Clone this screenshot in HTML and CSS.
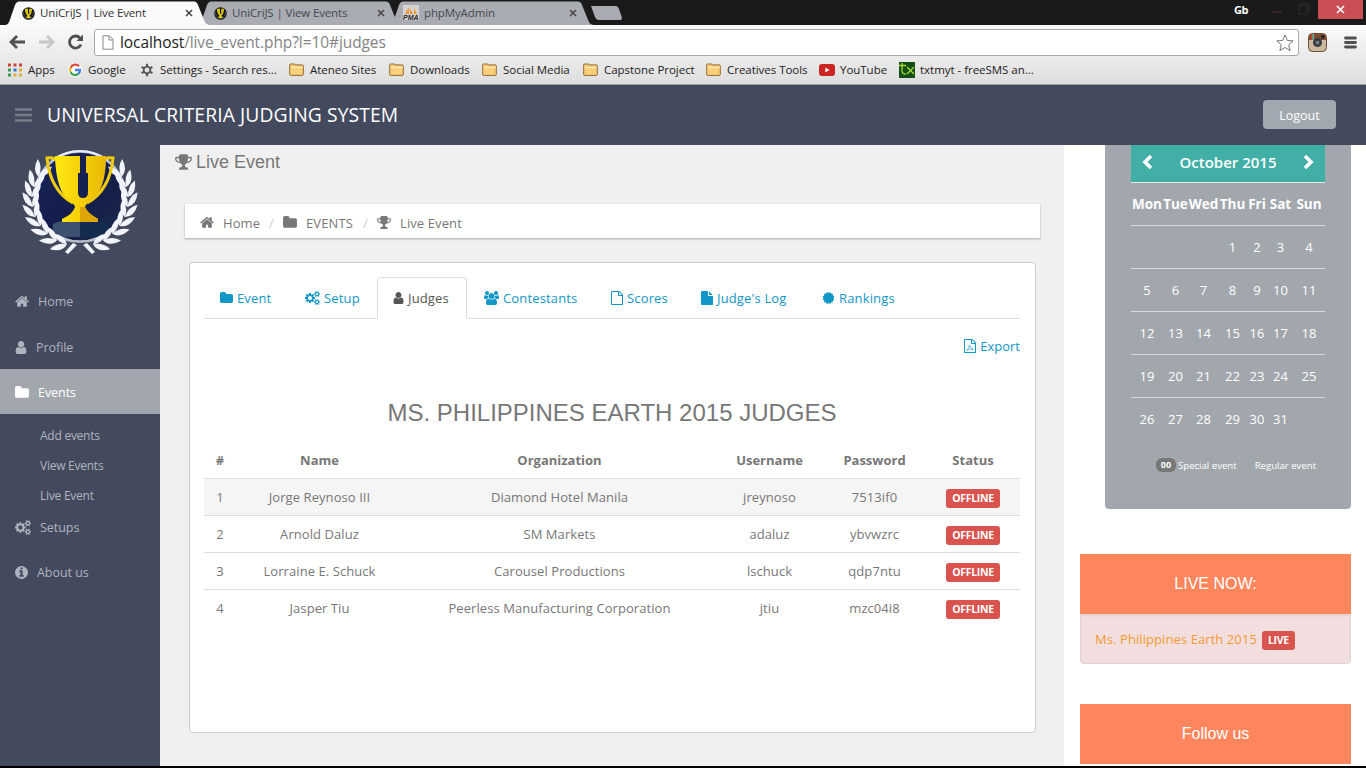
FILE: index.html
```html
<!DOCTYPE html>
<html lang="en">
<head>
<meta charset="utf-8">
<title>UniCriJS | Live Event</title>
<link rel="stylesheet" href="styles.css">
</head>
<body>
<svg class="defs" width="0" height="0" aria-hidden="true">
  <symbol id="home" viewBox="64 0 1664 1792"><path d="M1472 992v480q0 26-19 45t-45 19h-384v-384h-256v384h-384q-26 0-45-19t-19-45v-480q0-1 .5-3t.5-3l575-474 575 474q1 2 1 6zm223-69l-62 74q-8 9-21 11h-3q-13 0-21-7l-692-577-692 577q-12 8-24 7-13-2-21-11l-62-74q-8-10-7-23.5t11-21.5l719-599q32-26 76-26t76 26l244 204v-195q0-14 9-23t23-9h192q14 0 23 9t9 23v408l219 182q10 8 11 21.5t-7 23.5z"/></symbol>
  <symbol id="user" viewBox="256 0 1280 1792"><path d="M1536 1399q0 109-62.5 187t-150.5 78h-854q-88 0-150.5-78t-62.5-187q0-85 8.5-160.5t31.5-152 58.5-131 94-89 134.5-34.5q131 128 313 128t313-128q76 0 134.5 34.5t94 89 58.5 131 31.5 152 8.5 160.5zm-256-887q0 159-112.5 271.5t-271.5 112.5-271.5-112.5-112.5-271.5 112.5-271.5 271.5-112.5 271.5 112.5 112.5 271.5z"/></symbol>
  <symbol id="folder" viewBox="64 0 1664 1792"><path d="M1728 608v704q0 92-66 158t-158 66h-1216q-92 0-158-66t-66-158v-960q0-92 66-158t158-66h320q92 0 158 66t66 158v32h672q92 0 158 66t66 158z"/></symbol>
  <symbol id="info" viewBox="128 0 1536 1792"><path d="M1152 1376v-160q0-14-9-23t-23-9h-96v-512q0-14-9-23t-23-9h-320q-14 0-23 9t-9 23v160q0 14 9 23t23 9h96v320h-96q-14 0-23 9t-9 23v160q0 14 9 23t23 9h448q14 0 23-9t9-23zm-128-896v-160q0-14-9-23t-23-9h-192q-14 0-23 9t-9 23v160q0 14 9 23t23 9h192q14 0 23-9t9-23zm640 416q0 209-103 385.5t-279.5 279.5-385.5 103-385.5-103-279.5-279.5-103-385.5 103-385.5 279.5-279.5 385.5-103 385.5 103 279.5 279.5 103 385.5z"/></symbol>
  <symbol id="trophy" viewBox="64 0 1664 1792"><path d="M522 883q-74-162-74-371h-256v96q0 78 94.5 162t235.5 113zm1078-275v-96h-256q0 209-74 371 141-29 235.5-113t94.5-162zm128-128v128q0 71-41.5 143t-112 130-173 97.5-215.5 44.5q-42 54-95 95-38 34-52.5 72.5t-14.5 89.5q0 54 30.5 91t97.5 37q75 0 133.5 45.5t58.5 114.5v64q0 14-9 23t-23 9h-832q-14 0-23-9t-9-23v-64q0-69 58.5-114.5t133.5-45.5q67 0 97.5-37t30.5-91q0-51-14.5-89.5t-52.5-72.5q-53-41-95-95-113-5-215.5-44.5t-173-97.5-112-130-41.5-143v-128q0-40 28-68t68-28h288v-96q0-66 47-113t113-47h576q66 0 113 47t47 113v96h288q40 0 68 28t28 68z"/></symbol>
  <symbol id="cogs" viewBox="0 0 1920 1792"><path d="M896 896q0-106-75-181t-181-75-181 75-75 181 75 181 181 75 181-75 75-181zm768 512q0-52-38-90t-90-38-90 38-38 90q0 53 37.5 90.5t90.5 37.5 90.5-37.5 37.5-90.5zm0-1024q0-52-38-90t-90-38-90 38-38 90q0 53 37.5 90.5t90.5 37.5 90.5-37.5 37.5-90.5zm-384 421v185q0 10-7 19.5t-16 10.5l-155 24q-11 35-32 76 34 48 90 115 7 11 7 20 0 12-7 19-23 30-82.5 89.5t-78.5 59.5q-11 0-21-7l-115-90q-37 19-77 31-11 108-23 155-7 24-30 24h-186q-11 0-20-7.5t-10-17.5l-23-153q-34-10-75-31l-118 89q-7 7-20 7-11 0-21-8-144-133-144-160 0-9 7-19 10-14 41-53t47-61q-23-44-35-82l-152-24q-10-1-17-9.5t-7-19.5v-185q0-10 7-19.5t16-10.5l155-24q11-35 32-76-34-48-90-115-7-11-7-20 0-12 7-20 22-30 82-89t79-59q11 0 21 7l115 90q34-18 77-32 11-108 23-154 7-24 30-24h186q11 0 20 7.5t10 17.5l23 153q34 10 75 31l118-89q8-7 20-7 11 0 21 8 144 133 144 160 0 8-7 19-12 16-42 54t-45 60q23 48 34 82l152 23q10 2 17 10.5t7 19.5zm640 533v140q0 16-149 31-12 27-30 52 51 113 51 138 0 4-4 7-122 71-124 71-8 0-46-47t-52-68q-20 2-30 2t-30-2q-14 21-52 68t-46 47q-2 0-124-71-4-3-4-7 0-25 51-138-18-25-30-52-149-15-149-31v-140q0-16 149-31 13-29 30-52-51-113-51-138 0-4 4-7 4-2 35-20t59-34 30-16q8 0 46 46.5t52 67.5q20-2 30-2t30 2q51-71 92-112l6-2q4 0 124 70 4 3 4 7 0 25-51 138 17 23 30 52 149 15 149 31zm0-1024v140q0 16-149 31-12 27-30 52 51 113 51 138 0 4-4 7-122 71-124 71-8 0-46-47t-52-68q-20 2-30 2t-30-2q-14 21-52 68t-46 47q-2 0-124-71-4-3-4-7 0-25 51-138-18-25-30-52-149-15-149-31v-140q0-16 149-31 13-29 30-52-51-113-51-138 0-4 4-7 4-2 35-20t59-34 30-16q8 0 46 46.5t52 67.5q20-2 30-2t30 2q51-71 92-112l6-2q4 0 124 70 4 3 4 7 0 25-51 138 17 23 30 52 149 15 149 31z"/></symbol>
  <symbol id="users" viewBox="0 0 1920 1792"><path d="M593 896q-162 5-265 128h-134q-82 0-138-40.5t-56-118.5q0-353 124-353 6 0 43.5 21t97.5 42.5 119 21.5q67 0 133-23-5 37-5 66 0 159 81 256zm1071 637q0 120-73 189.5t-194 69.5h-874q-121 0-194-69.5t-73-189.5q0-53 3.5-103.5t14-109 26.5-108.5 43-97.5 62-81 85.5-53.5 111.5-20q10 0 43 21.5t73 48 107 48 135 21.5 135-21.5 107-48 73-48 43-21.5q61 0 111.5 20t85.5 53.5 62 81 43 97.5 26.5 108.5 14 109 3.5 103.5zm-1024-1277q0 106-75 181t-181 75-181-75-75-181 75-181 181-75 181 75 75 181zm704 384q0 159-112.5 271.5t-271.5 112.5-271.5-112.5-112.5-271.5 112.5-271.5 271.5-112.5 271.5 112.5 112.5 271.5zm576 225q0 78-56 118.5t-138 40.5h-134q-103-123-265-128 81-97 81-256 0-29-5-66 66 23 133 23 59 0 119-21.5t97.5-42.5 43.5-21q124 0 124 353zm-128-609q0 106-75 181t-181 75-181-75-75-181 75-181 181-75 181 75 75 181z"/></symbol>
  <symbol id="file-o" viewBox="0 0 1536 1792"><path d="M1468 380q28 28 48 76t20 88v1152q0 40-28 68t-68 28h-1344q-40 0-68-28t-28-68v-1600q0-40 28-68t68-28h896q40 0 88 20t76 48zm-444-244v376h376q-10-29-22-41l-313-313q-12-12-41-22zm384 1528v-1024h-416q-40 0-68-28t-28-68v-416h-768v1536h1280z"/></symbol>
  <symbol id="file" viewBox="128 0 1536 1792"><path d="M1152 512v-472q22 14 36 28l408 408q14 14 28 36h-472zm-128 32q0 40 28 68t68 28h544v1056q0 40-28 68t-68 28h-1344q-40 0-68-28t-28-68v-1600q0-40 28-68t68-28h800v544z"/></symbol>
  <symbol id="cert" viewBox="0 0 16 16"><g><rect x="2.7" y="2.7" width="10.6" height="10.6"/><rect x="2.7" y="2.7" width="10.6" height="10.6" transform="rotate(30 8 8)"/><rect x="2.7" y="2.7" width="10.6" height="10.6" transform="rotate(60 8 8)"/></g></symbol>
  <symbol id="fav" viewBox="0 0 13 13"><circle cx="6.500" cy="6.500" r="6.300" fill="#16181c"/><path d="M1 4.500Q2 11 6.500 12 11 11 12 4.500" fill="none" stroke="#5c6068" stroke-width=".8"/><path d="M3 1.700h3v5h1.200v-5H10q0 5-2.500 6.800L9 11H4l1.400-2.500Q3 7 3 1.700z" fill="#d8c80d"/></symbol>
  <symbol id="bmf" viewBox="0 0 15 13"><path d="M.7 11.500V2q0-1 1-1h3.600q.8 0 1 .9h7q1 0 1 1v8.600q0 .9-1 .9H1.600q-.9 0-.9-.9z" fill="#f9cf7c" stroke="#94692c"/><path d="M1.500 4.500h12.500" stroke="#fff0bd"/></symbol>
  <symbol id="close" viewBox="0 0 8 8"><path d="M1 1l6 6M7 1L1 7" fill="none" stroke="#444" stroke-width="1.500"/></symbol>
  <symbol id="tab" viewBox="0 0 206 24"><path d="M0 24Q3 24 4.500 20L10 4q1.500-3.500 4-3.500h175q3 0 4 3.500l6.500 16q1.500 4 6 4z"/></symbol>
</svg>

<div class="screen">
  <div class="chrome">
    <div class="tabstrip">
      <div class="tab t1"><svg class="tab-bg"><use href="#tab"/></svg><svg class="fav"><use href="#fav"/></svg><span>UniCriJS | Live Event</span><svg class="x"><use href="#close"/></svg></div>
      <div class="tab t2"><svg class="tab-bg"><use href="#tab"/></svg><svg class="fav"><use href="#fav"/></svg><span>UniCriJS | View Events</span><svg class="x"><use href="#close"/></svg></div>
      <div class="tab t3"><svg class="tab-bg"><use href="#tab"/></svg><svg class="pma" viewBox="0 0 16 16"><rect width="16" height="15" fill="#d5d3d0"/><path d="M2 9L6 2v7zM7 9V3l3 6zM11 9V3l3 6z" fill="#ee9634"/></svg><b class="pma-text">PMA</b><span>phpMyAdmin</span><svg class="x"><use href="#close"/></svg></div>
      <svg class="newtab" viewBox="0 0 32 16"><path d="M1 1h24q3 0 4 3l3 9q0 2-2 2H9q-3 0-4-3z" fill="#a9acb2"/></svg>
      <div class="winctl">
        <b>Gb</b>
        <svg class="minmax" viewBox="0 0 50 18"><path d="M10 11h9" stroke="#3a2224" stroke-width="2"/><path d="M36 5h8v8h-8zM38 5V3h8v8h-2" fill="none" stroke="#2c2c2e"/></svg>
        <div class="winclose"><svg width="9" height="9" viewBox="0 0 9 9"><path d="M1 1l7 7M8 1L1 8" stroke="#fff" stroke-width="1.600"/></svg></div>
      </div>
    </div>
    <div class="toolbar">
      <svg class="nav" viewBox="0 0 84 20"><g fill="none" stroke-width="2.800"><path d="M25 10H11M17 4l-6 6 6 6" stroke="#505050"/><path d="M39 10h13M47 4l6 6-6 6" stroke="#c6c6c6"/><path d="M81 12.500A6 6 0 1 1 80 6" stroke="#505050"/></g><path d="M83 2.500V9h-6.500z" fill="#505050"/></svg>
      <div class="omni">
        <svg width="12" height="15" viewBox="0 0 12 15"><path d="M1 .8h6.500L11 4.500v9.700H1zM7 1v4h4" fill="#fff" stroke="#888"/></svg>
        <span class="url"><i>localhost</i>/live_event.php?l=10#judges</span>
        <svg class="star" width="18" height="18" viewBox="0 0 18 18"><path d="M9 1l2.300 5.400 5.900.5-4.500 3.900 1.400 5.700L9 13.500l-5.100 3 1.400-5.700L.8 6.900l5.900-.5z" fill="#fff" stroke="#777" stroke-linejoin="round"/></svg>
      </div>
      <svg class="insta" viewBox="0 0 19 19"><rect x=".5" y=".5" width="18" height="18" rx="4" fill="#ccb99f" stroke="#6d4a33"/><path d="M1 7V4q0-3 3-3h11q3 0 3 3v3z" fill="#7c4e36"/><path d="M3 1.200h1.500V7H3z" fill="#d63d30"/><path d="M4.500 1h1.500v6H4.500z" fill="#53b7a4"/><rect x="13" y="2" width="3.500" height="3.500" rx="1" fill="#27211f"/><circle cx="9.500" cy="9.500" r="4.500" fill="#383a3d"/><circle cx="9.500" cy="9.500" r="2" fill="#707880"/></svg>
      <svg class="menu" viewBox="0 0 13 13"><path d="M1.500 2h10M1.500 6.500h10M1.500 11h10" stroke="#505050" stroke-width="2.800" stroke-linecap="round"/></svg>
    </div>
    <div class="bookmarks">
      <div><svg class="b14" viewBox="0 0 14 14"><path d="M0 2h3M5.500 2h3M11 2h3" stroke="#cb4438" stroke-width="3"/><path d="M0 7h3" stroke="#3c9c52" stroke-width="3"/><path d="M5.500 7h3" stroke="#3a76cb" stroke-width="3"/><path d="M11 7h3" stroke="#e0ad35" stroke-width="3"/><path d="M0 12h3" stroke="#3c9c52" stroke-width="3"/><path d="M5.500 12h3M11 12h3" stroke="#dfb03a" stroke-width="3"/></svg><span>Apps</span></div>
      <div><svg class="b14" viewBox="0 0 14 14"><circle cx="7" cy="7" r="7" fill="#fff"/><g fill="none" stroke-width="2.300"><path d="M11 3.300A5 5 0 0 0 2.600 4.800" stroke="#de4b3d"/><path d="M2.600 4.800a5 5 0 0 0 0 4.400" stroke="#f0b62d"/><path d="M2.600 9.200A5 5 0 0 0 10.500 10.700" stroke="#38a454"/><path d="M10.500 10.700Q12 9.300 12 7H7" stroke="#4680e8"/></g></svg><span>Google</span></div>
      <div><svg class="b14" viewBox="0 0 14 14"><g fill="none" stroke="#555"><circle cx="6" cy="7" r="3.300" stroke-width="1.800"/><path d="M6 .8v2.400M6 10.800v2.400M.6 3.900l2.100 1.200M9.300 8.900l2.100 1.200M.6 10.100l2.100-1.200M9.300 5.100l2.100-1.200" stroke-width="2.200"/></g></svg><span>Settings - Search res...</span></div>
      <div><svg class="b15"><use href="#bmf"/></svg><span>Ateneo Sites</span></div>
      <div><svg class="b15"><use href="#bmf"/></svg><span>Downloads</span></div>
      <div><svg class="b15"><use href="#bmf"/></svg><span>Social Media</span></div>
      <div><svg class="b15"><use href="#bmf"/></svg><span>Capstone Project</span></div>
      <div><svg class="b15"><use href="#bmf"/></svg><span>Creatives Tools</span></div>
      <div><svg class="b16" viewBox="0 0 16 12"><rect width="16" height="12" rx="3" fill="#cb2522"/><path d="M6.300 3.500l4.200 2.500-4.200 2.500z" fill="#fff"/></svg><span>YouTube</span></div>
      <div><svg class="b16t" viewBox="0 0 16 16"><rect width="16" height="16" fill="#144d16"/><path d="M0 3.500h7M3 1v8q0 3 4 3M8 5l7 7M15 5l-7 7" fill="none" stroke="#a7d735" stroke-width="1.300"/></svg><span>txtmyt - freeSMS an...</span></div>
    </div>
  </div>

  <header class="appbar">
    <svg class="burger" viewBox="0 0 17 14"><path d="M0 1.500h17M0 7h17M0 12.500h17" stroke="#777d87" stroke-width="2.600"/></svg>
    <h1>UNIVERSAL CRITERIA JUDGING SYSTEM</h1>
    <button>Logout</button>
  </header>

  <div class="body">
    <aside class="side">
      <svg class="logo" viewBox="0 0 120 106">
        <defs>
          <linearGradient id="gold" x1="0" x2="1"><stop offset="0" stop-color="#ffe911"/><stop offset=".5" stop-color="#f5cf08"/><stop offset="1" stop-color="#e9b808"/></linearGradient>
          <linearGradient id="night" x1="0" x2="1" y2="1"><stop offset="0" stop-color="#19265c"/><stop offset=".55" stop-color="#141d4a"/><stop offset="1" stop-color="#1c2c4c"/></linearGradient>
          <path id="leaf" d="M0 1Q-9-2-8-15 0-10 0 1zM0 1Q-1-8 8-14 9-3 0 1z"/>
          <g id="branch" fill="#f2f4fb">
            <use href="#leaf" transform="translate(46 95) rotate(-80)"/>
            <use href="#leaf" transform="translate(36 91) rotate(-64)"/>
            <use href="#leaf" transform="translate(27 84) rotate(-50)"/>
            <use href="#leaf" transform="translate(20 76) rotate(-35)"/>
            <use href="#leaf" transform="translate(15 67) rotate(-20)"/>
            <use href="#leaf" transform="translate(12.500 57) rotate(-8)"/>
            <use href="#leaf" transform="translate(12 47) rotate(4)"/>
            <use href="#leaf" transform="translate(14 37) rotate(14)"/>
            <use href="#leaf" transform="translate(19 27) rotate(24)"/>
            <path d="M53 94l4 2-9 9-3-2z"/>
          </g>
        </defs>
        <circle cx="60" cy="47.500" r="45" fill="url(#night)" stroke="#b9bfd0" stroke-width="2.500"/>
        <path d="M33 75q8-5 27-2v15H33z" fill="#3c5070"/><path d="M60 73h28v15H60z" fill="#142c50"/>
        <path d="M32 11Q60-7 88 11" fill="none" stroke="#eceff7" stroke-width="2"/>
        <use href="#branch"/><use href="#branch" transform="matrix(-1 0 0 1 120 0)"/>
        <path d="M38 13q-3-5-11-4 3 32 26 45M82 13q3-5 11-4-3 32-26 45" fill="none" stroke="#efcb0d" stroke-width="3"/>
        <path d="M35 7h25v17h-2v18q0 4 3 4t3-4V24h-2V7h24q0 36-16 45-5 4-5 6 2 6 13 12v3H42v-3q11-5 13-12 0-2-5-6Q36 43 35 7z" fill="url(#gold)"/>
        <path d="M60 58v15h18v-3Q67 64 65 58z" fill="#dda605"/><path d="M61 7h5v17h2v19q0 6-5 6t-5-6V24h3z" fill="#15214f"/>
      </svg>
      <nav>
        <a class="item up"><svg class="i i14"><use href="#home"/></svg><span>Home</span></a>
        <a class="item"><svg class="i i12"><use href="#user"/></svg><span>Profile</span></a>
        <a class="item on"><svg class="i i14"><use href="#folder"/></svg><span>Events</span></a>
        <div class="sub"><a>Add events</a><a>View Events</a><a>Live Event</a></div>
        <a class="item up"><svg class="i i16"><use href="#cogs"/></svg><span>Setups</span></a>
        <a class="item up"><svg class="i i13"><use href="#info"/></svg><span>About us</span></a>
      </nav>
    </aside>

    <main class="main">
      <h2><svg class="h2i"><use href="#trophy"/></svg>Live Event</h2>
      <div class="crumbs">
        <span class="c1"><svg class="i"><use href="#home"/></svg>Home</span><em>/</em>
        <span class="c2"><svg class="i"><use href="#folder"/></svg>EVENTS</span><em>/</em>
        <span class="c3"><svg class="i"><use href="#trophy"/></svg>Live Event</span>
      </div>
      <section class="panel">
        <div class="tabs">
          <a><svg class="w13"><use href="#folder"/></svg><span>Event</span></a>
          <a><svg class="w15"><use href="#cogs"/></svg><span>Setup</span></a>
          <a class="cur"><svg class="w11"><use href="#user"/></svg><span>Judges</span></a>
          <a><svg class="w15"><use href="#users"/></svg><span>Contestants</span></a>
          <a><svg class="w12"><use href="#file-o"/></svg><span>Scores</span></a>
          <a><svg class="w12"><use href="#file"/></svg><span>Judge's Log</span></a>
          <a><svg class="w13"><use href="#cert"/></svg><span>Rankings</span></a>
        </div>
        <div class="export"><svg viewBox="0 0 1536 1792"><use href="#file-o" width="1536" height="1792"/><path d="M300 1480q300-200 400-720 80 450 500 560-420-90-850 130" fill="none" stroke="currentColor" stroke-width="85"/></svg><span>Export</span></div>
        <h3>MS. PHILIPPINES EARTH 2015 JUDGES</h3>
        <table>
          <colgroup><col class="k1"><col class="k2"><col class="k3"><col class="k4"><col class="k5"><col class="k6"></colgroup>
          <thead><tr><th>#</th><th>Name</th><th>Organization</th><th>Username</th><th>Password</th><th>Status</th></tr></thead>
          <tbody>
            <tr><td>1</td><td>Jorge Reynoso III</td><td>Diamond Hotel Manila</td><td>jreynoso</td><td>7513if0</td><td><b class="badge">OFFLINE</b></td></tr>
            <tr><td>2</td><td>Arnold Daluz</td><td>SM Markets</td><td>adaluz</td><td>ybvwzrc</td><td><b class="badge">OFFLINE</b></td></tr>
            <tr><td>3</td><td>Lorraine E. Schuck</td><td>Carousel Productions</td><td>lschuck</td><td>qdp7ntu</td><td><b class="badge">OFFLINE</b></td></tr>
            <tr><td>4</td><td>Jasper Tiu</td><td>Peerless Manufacturing Corporation</td><td>jtiu</td><td>mzc04i8</td><td><b class="badge">OFFLINE</b></td></tr>
          </tbody>
        </table>
      </section>
    </main>

    <aside class="right">
      <div class="cal">
        <div class="month"><svg viewBox="0 0 12 16"><path d="M10 2L4 8l6 6" fill="none" stroke="#fff" stroke-width="3.600"/></svg><b>October 2015</b><svg viewBox="0 0 12 16"><path d="M2 2l6 6-6 6" fill="none" stroke="#fff" stroke-width="3.600"/></svg></div>
        <div class="wk days"><b>Mon</b><b>Tue</b><b>Wed</b><b>Thu</b><b>Fri</b><b>Sat</b><b>Sun</b></div>
        <div class="wk"><i></i><i></i><i></i><i>1</i><i>2</i><i>3</i><i>4</i></div>
        <div class="wk"><i>5</i><i>6</i><i>7</i><i>8</i><i>9</i><i>10</i><i>11</i></div>
        <div class="wk"><i>12</i><i>13</i><i>14</i><i>15</i><i>16</i><i>17</i><i>18</i></div>
        <div class="wk"><i>19</i><i>20</i><i>21</i><i>22</i><i>23</i><i>24</i><i>25</i></div>
        <div class="wk last"><i>26</i><i>27</i><i>28</i><i>29</i><i>30</i><i>31</i><i></i></div>
        <div class="legend"><b>00</b><span>Special event</span><span class="reg">Regular event</span></div>
      </div>
      <div class="orange">LIVE NOW:</div>
      <div class="live"><span>Ms. Philippines Earth 2015</span><b class="badge">LIVE</b></div>
      <div class="orange follow">Follow us</div>
    </aside>
  </div>
</div>
</body>
</html>
```
FILE: styles.css
```css
* { box-sizing: border-box; }
body { margin: 0; background: #000; font-family: "Open Sans", "Noto Sans", sans-serif; }
.defs { position: absolute; }
.screen { width: 1366px; height: 768px; overflow: hidden; display: flex; flex-direction: column; border-bottom: 2px solid #000; }
svg { display: block; flex: none; fill: currentColor; overflow: visible; }
span, a, b, i, h1 { white-space: nowrap; }
i { font-style: normal; }

/* Browser window */
.chrome { height: 85px; flex: none; background: linear-gradient(#fafafa 25px, #dedede 84px); border-bottom: 1px solid #9b9b9b; }
.tabstrip { height: 25px; background: #1a1a1a; display: flex; align-items: flex-start; padding-left: 5px; }
.tab { position: relative; z-index: 1; width: 192px; height: 25px; padding: 1px 0 0 17px; display: flex; align-items: center; color: #333; font-size: 11.5px; letter-spacing: -.13px; }
.tab span { padding-bottom: 2px; }
.tab-bg { position: absolute; left: 0; top: 1px; width: 206px; height: 24px; z-index: -1; color: #a9acb3; }
.t1 { z-index: 3; }
.t1 .tab-bg { color: #fafafa; }
.t2 { z-index: 2; color: #454950; }
.t3 { color: #454950; }
.fav { width: 13px; height: 13px; margin-right: 5px; }
.tab .x { position: absolute; left: 180px; top: 9px; width: 8px; height: 8px; }
.t3 { padding-left: 14px; }
.pma { width: 16px; height: 16px; margin-right: 5px; }
.pma-text { position: absolute; left: 14px; top: 14px; font: italic bold 7px "Liberation Sans", sans-serif; color: #25252c; letter-spacing: 0; }
.newtab { width: 32px; height: 16px; margin: 5px 0 0 9px; }
.winctl { margin-left: auto; margin-right: 3px; display: flex; height: 19px; align-items: center; color: #fff; font-size: 11px; letter-spacing: -.5px; }
.winctl b { padding-bottom: 1px; }
.minmax { width: 50px; height: 18px; margin-left: 15px; }
.winclose { width: 45px; height: 19px; margin-left: 5px; background: #c94f55; display: grid; place-items: center; }
.toolbar { height: 34px; display: flex; align-items: center; }
.nav { width: 84px; height: 20px; }
.omni { width: 1205px; height: 27px; margin: 1px 0 0 10px; border: 1px solid #a9a9a9; border-radius: 3px; background: #fff; display: flex; align-items: center; padding: 0 4px 0 7px; font-size: 15.5px; color: #848484; }
.url { margin-left: 6px; padding-bottom: 2px; letter-spacing: -.09px; }
.url i { color: #222; }
.star { margin-left: auto; }
.insta { width: 19px; height: 19px; margin-left: 9px; }
.menu { width: 13px; height: 13px; margin-left: 17px; }
.bookmarks { height: 21px; margin-left: 8px; display: grid; grid-template-columns: 60px 73px 148px 100px 93px 101px 123px 113px 80px 140px; font-size: 11.5px; color: #222; letter-spacing: -.03px; }
.bookmarks div { display: flex; align-items: center; }
.b14 { width: 14px; height: 14px; margin-right: 6px; }
.bookmarks div:nth-child(3) .b14 { margin-right: 5px; }
.b15 { width: 15px; height: 13px; margin-right: 6px; }
.b16 { width: 16px; height: 12px; margin-right: 5px; }
.b16t { width: 16px; height: 16px; margin-right: 5px; }

/* Application header */
.appbar { height: 60px; flex: none; background: #434a5e; display: flex; align-items: center; padding: 0 30px 0 15px; }
.burger { width: 17px; height: 14px; margin-right: 15px; }
.appbar h1 { margin: 0; padding-bottom: 2px; font-size: 19.3px; font-weight: 400; color: #fff; letter-spacing: .1px; }
.appbar button { margin: 0 0 1px auto; width: 73px; height: 29px; padding: 1px 0 0; border: 0; border-radius: 4px; background: #a2a8b0; color: #fff; font: 12.5px "Open Sans", sans-serif; }
.body { height: 621px; flex: none; display: flex; }

/* Left navigation */
.side { width: 160px; background: #434a5e; color: #aeb3bd; }
.logo { width: 120px; height: 106px; margin: 4px 0 0 20px; }
.side nav { margin-top: 24px; }
.item { display: flex; align-items: center; height: 45px; padding: 2px 0 0 15px; font-size: 12.5px; letter-spacing: -.05px; }
.item.up { padding-top: 0; }
.item .i { height: 15px; margin: -1px 9px 0 0; }
.i16 { width: 16px; }
.i12 { width: 12px; }
.i14 { width: 14px; }
.i13 { width: 13px; }
.on { background: #a1a7ad; color: #fff; }
.sub { padding: 7px 0 0 40px; display: flex; flex-direction: column; font-size: 12px; line-height: 30px; letter-spacing: -.25px; height: 91px; }

/* Main column */
.main { width: 904px; background: #f0f0f0; color: #777; }
.main h2 { margin: 0; height: 34px; padding-left: 15px; display: flex; align-items: center; font: 400 18px "Liberation Sans", sans-serif; }
.h2i { width: 17px; height: 18px; margin-right: 4px; }
.crumbs { width: 855px; height: 34px; margin: 25px 0 0 25px; padding: 3px 0 0 15px; background: #fff; box-shadow: 0 1px 2px rgba(0,0,0,.3); display: flex; align-items: center; font-size: 13px; }
.crumbs span { display: flex; align-items: center; letter-spacing: .1px; }
.crumbs .i { width: 14px; height: 15px; margin-right: 9px; }
.crumbs em { font-style: normal; color: #ccc; width: 18px; padding-left: 4px; }
.c1 { width: 65px; }
.c2 { width: 76px; }
.panel { width: 847px; height: 471px; margin: 24px 0 0 29px; border: 1px solid #ccc; border-radius: 4px; background: #fff; padding: 14px 15px 0 14px; }
.tabs { display: flex; height: 42px; border-bottom: 1px solid #ddd; color: #1297c8; font-size: 13px; letter-spacing: .15px; }
.tabs a { height: 42px; display: flex; align-items: center; padding-left: 15px; border: 1px solid transparent; }
.tabs span { margin-left: 4px; }
.tabs a:nth-child(1) { width: 85px; }
.tabs a:nth-child(2) { width: 88px; }
.tabs a:nth-child(3) { width: 90px; }
.tabs a:nth-child(4) { width: 127px; padding-left: 16px; }
.tabs a:nth-child(5) { width: 90px; padding-left: 16px; }
.tabs a:nth-child(6) { width: 122px; padding-left: 16px; }
.tabs a.cur { color: #555; background: #fff; border: 1px solid #ddd; border-bottom-color: #fff; border-radius: 4px 4px 0 0; }
.tabs svg { height: 14px; }
.w11 { width: 11px; }
.w12 { width: 12px; }
.w13 { width: 13px; }
.w15 { width: 15px; }
.export { margin-top: 16px; height: 21px; display: flex; align-items: center; justify-content: flex-end; color: #1297c8; font-size: 13px; }
.export svg { width: 12px; height: 14px; margin-right: 4px; }
.panel h3 { margin: 43px 0 0; height: 27px; text-align: center; font: 400 24px/27px "Liberation Sans", sans-serif; }
.panel table { width: 816px; margin-top: 15px; table-layout: fixed; border-collapse: collapse; font-size: 13px; letter-spacing: .07px; text-align: center; }
.panel tr { height: 37px; }
.panel th, .panel td { padding: 0; }
.panel th { padding-top: 2px; letter-spacing: 0; }
.panel td { border-top: 1px solid #ddd; }
.panel tbody tr:first-child { background: #f5f5f5; }
.k1 { width: 32px; }
.k2 { width: 167px; }
.k3 { width: 313px; }
.k4 { width: 107px; }
.k5 { width: 103px; }
.k6 { width: 94px; }
.badge { display: inline-block; height: 19px; padding: 0 6px; border-radius: 3px; background: #d9534f; color: #fff; font-size: 10.5px; line-height: 19px; letter-spacing: -.3px; vertical-align: middle; }
td .badge { margin-top: 4px; }

/* Right column */
.right { width: 302px; background: #fff; padding-left: 16px; }
.cal { width: 246px; height: 364px; margin-left: 25px; padding: 0 26px; background: #a1a7ad; border-radius: 0 0 4px 4px; color: #fff; }
.month { height: 38px; padding: 0 10px 3px; background: #42afa6; border-bottom: 1px solid #e4e6e8; display: flex; align-items: center; justify-content: space-between; font-size: 15px; }
.month b { font-weight: 600; }
.month svg { width: 12px; height: 16px; }
.wk { height: 43px; border-bottom: 1px solid #d6d9dc; display: grid; grid-template-columns: 32px 25px 31px 27px 22px 25px 32px; align-items: center; justify-items: center; font-size: 13px; }
.days { font-size: 13.5px; }
.last { border: 0; padding-bottom: 2px; }
.legend { margin-top: 17px; padding-left: 25px; display: flex; align-items: center; font-size: 9.6px; letter-spacing: 0; }
.legend b { width: 20px; height: 14px; border-radius: 6px; background: #777; font-size: 9px; line-height: 14px; text-align: center; margin-right: 2px; }
.reg { margin-left: 18px; }
.orange { width: 271px; height: 60px; margin-top: 45px; background: #ff865c; color: #fff; font: 16px/59px "Liberation Sans", sans-serif; text-align: center; }
.live { width: 271px; height: 50px; padding: 2px 0 0 14px; background: #f2dede; border: 1px solid #e3d2d5; border-radius: 0 0 4px 4px; display: flex; align-items: center; gap: 5px; font-size: 13px; letter-spacing: .08px; color: #f29b31; box-shadow: inset 0 1px 2px rgba(0,0,0,.06); }
.live span { padding-bottom: 2px; }
.orange.follow { margin-top: 40px; }
```
